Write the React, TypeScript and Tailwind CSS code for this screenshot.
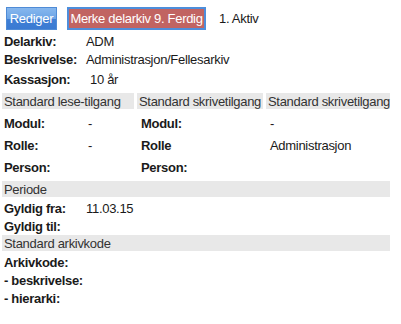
import React from "react";

type Row = { label: string; value?: string };

function InfoRow({ label, value, h = "h-[18px]" }: Row & { h?: string }) {
  return (
    <div className={`flex items-center whitespace-nowrap ${h}`}>
      <div className="w-[84px] shrink-0 pl-[2px] font-bold">{label}</div>
      <div>{value}</div>
    </div>
  );
}

function Header({ children }: { children: React.ReactNode }) {
  return (
    <div className="flex h-[16px] items-center whitespace-nowrap bg-[#e8e8e8] pl-[2px] text-[#333]">
      {children}
    </div>
  );
}

export default function App() {
  const access = [
    { l1: "Modul:", v1: "-", l2: "Modul:", v2: "-" },
    { l1: "Rolle:", v1: "-", l2: "Rolle", v2: "Administrasjon" },
    { l1: "Person:", v1: "", l2: "Person:", v2: "" },
  ];

  return (
    <div className="min-h-[324px] w-[401px] bg-white text-[13px] leading-[15px] tracking-[-0.3px] text-[#1a1a1a] [font-family:'Liberation_Sans',Arial,sans-serif]">
      <div className="flex items-center whitespace-nowrap pl-[6px] pt-[7px]">
        <button className="h-[23px] w-[51px] border border-[#4f8bd6] bg-[linear-gradient(#86b7ee_0%,#6da5e6_50%,#3f7fd6_52%,#3a7ad2_100%)] px-0 text-white">
          Rediger
        </button>
        <button className="ml-[10px] h-[23px] w-[139px] border-2 border-[#4d8edb] bg-[#c16462] px-0 text-white">
          Merke delarkiv 9. Ferdig
        </button>
        <span className="ml-[13px]">1. Aktiv</span>
      </div>

      <div className="mt-[2px] pl-[2px]">
        <InfoRow label="Delarkiv:" value="ADM" />
        <InfoRow label="Beskrivelse:" value="Administrasjon/Fellesarkiv" />
        <div className="mt-[2px] flex h-[18px] items-center">
          <div className="w-[88px] pl-[2px] font-bold">Kassasjon:</div>
          <div>10 år</div>
        </div>
      </div>

      <div className="mt-[5px] w-[390px] pl-[2px]">
        <div className="grid grid-cols-[132px_126px_124px] gap-x-[3px]">
          <Header>Standard lese-tilgang</Header>
          <Header>Standard skrivetilgang</Header>
          <Header>Standard skrivetilgang</Header>
        </div>
        <div className="mt-[3px]">
          {access.map((r) => (
            <div key={r.l1} className="grid h-[22px] grid-cols-[132px_126px_124px] items-center gap-x-[3px] whitespace-nowrap">
              <div className="flex pl-[2px]">
                <span className="w-[84px] shrink-0 font-bold">{r.l1}</span>
                <span>{r.v1}</span>
              </div>
              <div className="pl-[4px] font-bold">{r.l2}</div>
              <div className="pl-[4px]">{r.v2}</div>
            </div>
          ))}
        </div>

        <div className="mt-[3px]">
          <Header>Periode</Header>
        </div>
        <div className="mt-[2px]">
          <InfoRow label="Gyldig fra:" value="11.03.15" />
          <InfoRow label="Gyldig til:" />
        </div>
        <Header>Standard arkivkode</Header>
        <div className="mt-[2px]">
          <InfoRow label="Arkivkode:" />
          <InfoRow label="- beskrivelse:" />
          <InfoRow label="- hierarki:" />
        </div>
      </div>
    </div>
  );
}
